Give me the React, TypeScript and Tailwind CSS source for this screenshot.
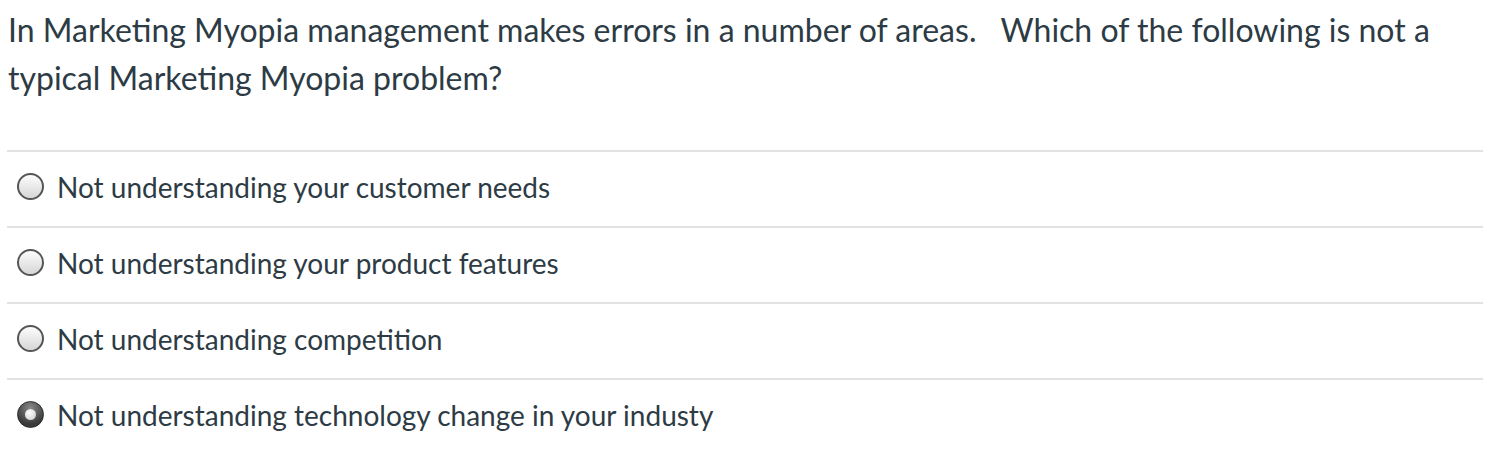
import React from 'react';

const answers = [
  { id: 'a1', label: 'Not understanding your customer needs', checked: false },
  { id: 'a2', label: 'Not understanding your product features', checked: false },
  { id: 'a3', label: 'Not understanding competition', checked: false },
  { id: 'a4', label: 'Not understanding technology change in your industy', checked: true },
];

const Radio = ({ checked }: { checked: boolean }) =>
  checked ? (
    <span className="w-[27px] h-[27px] rounded-full border border-[#2a2a2a] bg-[radial-gradient(circle_at_50%_25%,#8a8a8a,#3a3a3a_70%)] flex items-center justify-center shrink-0">
      <span className="w-[11px] h-[11px] rounded-full bg-[radial-gradient(circle_at_40%_35%,#fff,#c8c8c8)]" />
    </span>
  ) : (
    <span className="w-[27px] h-[27px] rounded-full border-2 border-[#555] bg-[linear-gradient(#fdfdfd,#d6d6d6)] shrink-0" />
  );

export default function App() {
  return (
    <div
      className="w-[1491px] h-[453px] bg-white text-[#2d3b45] overflow-hidden"
      style={{ fontFamily: 'Lato, "Open Sans", sans-serif' }}
    >
      <div className="pl-[8px] pr-[8px] pt-[6px] text-[32px] leading-[48px]">
        In Marketing Myopia management makes errors in a number of areas.&nbsp;&nbsp; Which of the following is not a typical Marketing Myopia problem?
      </div>
      <div className="mt-[48px] ml-[7px] w-[1476px]">
        {answers.map((a) => (
          <div key={a.id} className="border-t-2 border-[#e2e2e2] h-[76px] pb-[5px] flex items-center gap-[13px] pl-[10px] text-[28px]">
            <Radio checked={a.checked} />
            <span>{a.label}</span>
          </div>
        ))}
      </div>
    </div>
  );
}
